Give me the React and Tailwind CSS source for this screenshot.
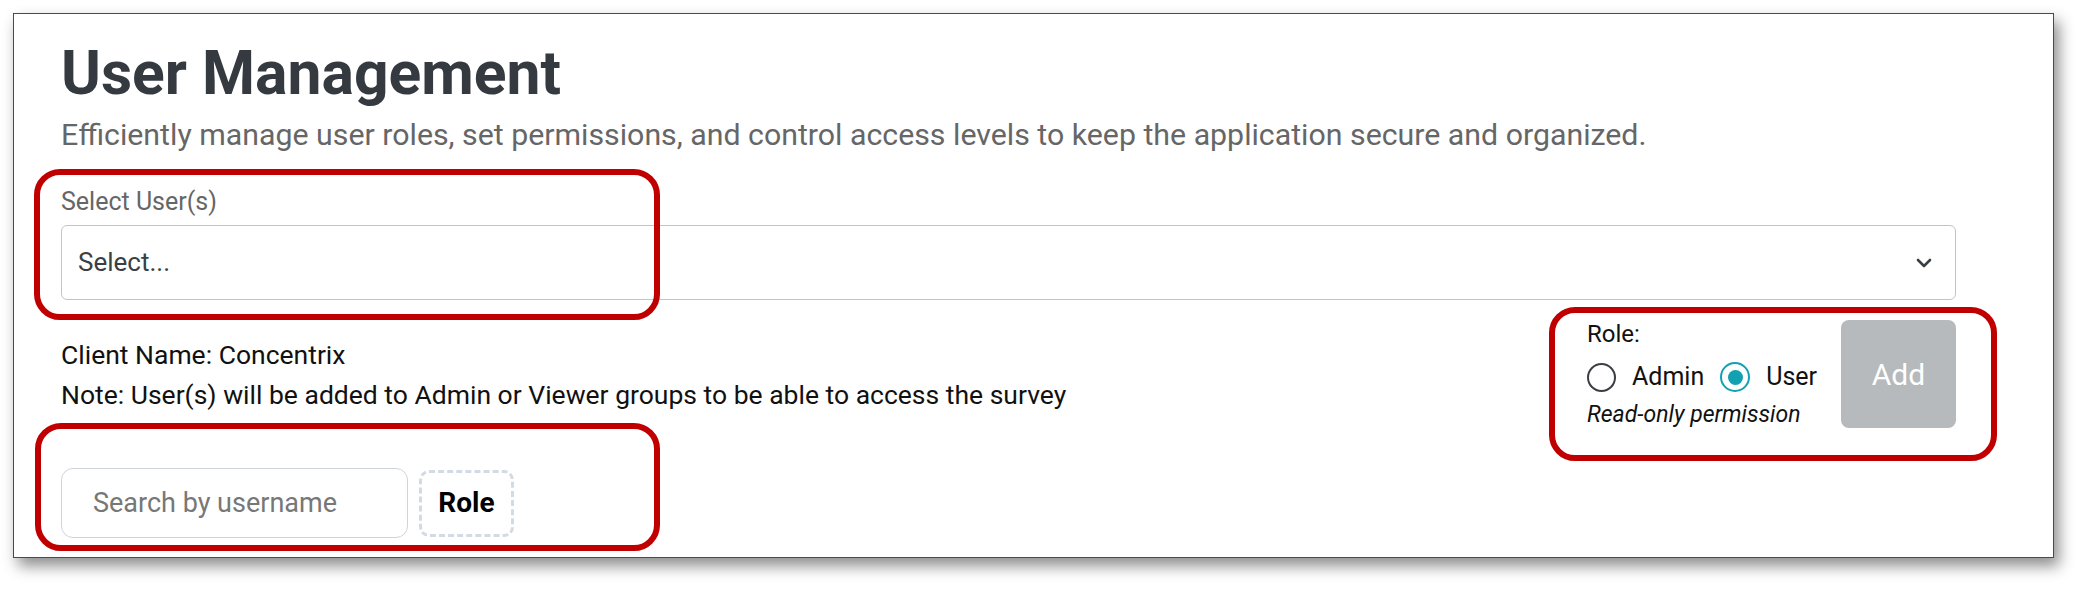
import React from 'react'

function Radio({ checked, label }) {
  return (
    <label className="flex items-center">
      {checked ? (
        <span className="flex h-[30px] w-[30px] items-center justify-center rounded-full border-[2px] border-[#12a1b1] bg-white">
          <span className="h-[15px] w-[15px] rounded-full bg-[#12a1b1]" />
        </span>
      ) : (
        <span className="h-[29px] w-[29px] rounded-full border-[2px] border-[#3b3f44] bg-white" />
      )}
      <span className="ml-[16px] text-[25px] leading-[32px] text-[#111]">{label}</span>
    </label>
  )
}

export default function App() {
  return (
    <div className="relative h-[595px] w-[2090px] bg-white pl-[13px] pt-[13px] font-['Roboto',sans-serif]">
      {/* framed screenshot */}
      <div className="h-[545px] w-[2041px] border border-[#4a4a4a] bg-white pl-[47px] pt-[30px] shadow-[5px_8px_14px_rgba(0,0,0,0.45)]">
        <h1 className="text-[60.6px] font-bold leading-[60px] text-[#343a40]">User Management</h1>
        <p className="mt-[13px] text-[30.3px] leading-[35px] text-[#666666]">
          Efficiently manage user roles, set permissions, and control access levels to keep the application secure and organized.
        </p>

        <div className="mt-[36px] w-[1895px]">
          <div className="mb-[9px] text-[25px] leading-[28px] text-[#666666]">Select User(s)</div>
          <div className="flex h-[75px] items-center justify-between rounded-[6px] border-[1.5px] border-[#c2c5c8] pl-[16px] pr-[23px]">
            <span className="text-[26px] text-[#3a3f44]">Select...</span>
            <svg width="16" height="10" viewBox="0 0 16 10" fill="none">
              <path d="M2 2 L8 8 L14 2" stroke="#3a3f44" strokeWidth="2.6" strokeLinecap="round" strokeLinejoin="round" />
            </svg>
          </div>

          <div className="flex items-start justify-between">
            <div className="mt-[35px] text-[26.5px] leading-[40px] text-[#111]">
              <p>Client Name: Concentrix</p>
              <p>Note: User(s) will be added to Admin or Viewer groups to be able to access the survey</p>
            </div>

            <div className="mt-[19px] flex items-start">
              <div className="w-[254px]">
                <div className="text-[24px] leading-[30px] text-[#111]">Role:</div>
                <div className="mt-[12px] flex h-[32px] items-center gap-[16px]">
                  <Radio label="Admin" />
                  <Radio checked label="User" />
                </div>
                <div className="mt-[9px] text-[23px] italic leading-[26px] text-[#111]">Read-only permission</div>
              </div>
              <button className="mt-[1px] flex h-[108px] w-[115px] items-center justify-center rounded-[8px] bg-[#b6babd] text-[30px] text-white">
                Add
              </button>
            </div>
          </div>
        </div>

        <div className="mt-[40px] flex items-center gap-[11px]">
          <div className="flex h-[70px] w-[347px] items-center rounded-[12px] border-[1.5px] border-[#cfd4dc] pl-[31px]">
            <span className="text-[27px] text-[#777777]">Search by username</span>
          </div>
          <div className="flex h-[67px] w-[95px] items-center justify-center rounded-[10px] border-[3px] border-dashed border-[#d2dae4]">
            <span className="text-[28px] font-bold text-black">Role</span>
          </div>
        </div>
      </div>

      {/* red annotation outlines */}
      <div className="absolute left-[34px] top-[169px] h-[151px] w-[626px] rounded-[26px] border-[6px] border-[#c00000]" />
      <div className="absolute left-[35px] top-[423px] h-[128px] w-[625px] rounded-[26px] border-[6px] border-[#c00000]" />
      <div className="absolute left-[1549px] top-[307px] h-[154px] w-[448px] rounded-[26px] border-[6px] border-[#c00000]" />
    </div>
  )
}
